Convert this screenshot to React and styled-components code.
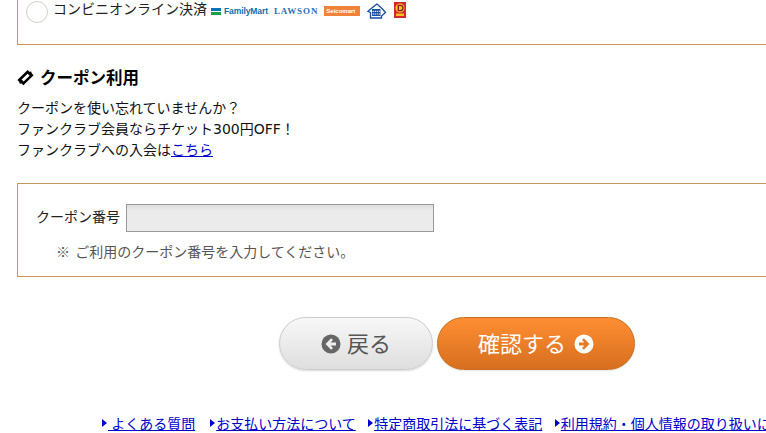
import React from "react";
import styled, { createGlobalStyle } from "styled-components";

const Global = createGlobalStyle`
  html, body { margin: 0; padding: 0; background: #fff; height: 433px; overflow: hidden; }
  body { font-family: "Noto Sans CJK JP", "Liberation Sans", sans-serif; color: #111; }
`;
const Page = styled.div`
  width: 766px; height: 433px; overflow: hidden; display: flex; flex-direction: column;
  padding-left: 17px; box-sizing: border-box;
`;
const PayBox = styled.div`
  width: 770px; height: 45px; box-sizing: border-box; flex: none;
  border: 1px solid #c8955f; border-top: none;
  display: flex; align-items: flex-start; padding: 0 0 0 8px;
`;
const Radio = styled.span`
  width: 22px; height: 22px; box-sizing: border-box; border: 1px solid #d4d0c8; border-radius: 50%; background: #fff;
  margin-top: 1px; flex: none;
`;
const PayLabel = styled.span`
  font-size: 14px; line-height: 16px; margin-left: 5px; color: #222; white-space: nowrap;
`;
const Logos = styled.span`
  display: flex; align-items: center; margin-left: 4px; height: 20px; margin-top: 1px;
`;
const FamilyMart = styled.span`
  display: inline-flex; align-items: center; gap: 3px;
  font: bold 8.5px "Liberation Sans", sans-serif; color: #0b6fa8; letter-spacing: -0.1px;
`;
const FmMark = styled.span`
  width: 10px; height: 7px; display: block;
  background: linear-gradient(#0a74b8 0 3px, #fff 3px 4px, #18a050 4px 7px);
`;
const Lawson = styled.span`
  font: bold 9px "Liberation Serif", serif; color: #2a6fb5; margin-left: 6px; letter-spacing: 0.9px;
`;
const Seicomart = styled.span`
  width: 36px; height: 10px; background: #f0823a; color: #fff; margin-left: 6px; flex: none;
  font: bold 6px/10px "Liberation Sans", sans-serif; padding-left: 2px; box-sizing: border-box; overflow: hidden;
`;
const MiniStop = styled.svg`
  width: 20px; height: 16px; margin-left: 7px; flex: none;
`;
const Daily = styled.svg`
  width: 12px; height: 16px; margin-left: 7px; flex: none; margin-top: -3px;
`;
const Heading = styled.h2`
  margin: 22px 0 0; display: flex; align-items: center; gap: 6px; height: 20px;
  font-size: 16.5px; line-height: 20px; font-weight: 700; color: #000;
`;
const Intro = styled.p`
  margin: 11px 0 0; font-size: 14px; line-height: 21px; color: #111;
  font-family: "DejaVu Sans", "Noto Sans CJK JP", sans-serif;
  a { color: #00c; text-decoration: underline; }
`;
const CouponBox = styled.div`
  margin-top: 22px; width: 770px; height: 94px; box-sizing: border-box; flex: none;
  border: 1px solid #c8955f; padding: 20px 0 0 18px;
`;
const FieldRow = styled.div`
  display: flex; align-items: center; gap: 6px;
`;
const FieldLabel = styled.label`
  font-size: 14px; color: #222; margin-top: -4px;
`;
const CouponInput = styled.input`
  width: 308px; height: 28px; box-sizing: border-box; border: 1px solid #999;
  background: linear-gradient(#dedede, #ebebeb 6px, #ebebeb); padding: 0; outline: none; border-radius: 0;
`;
const Note = styled.p`
  margin: 9px 0 0 20px; font-size: 14px; line-height: 20px; color: #555; word-spacing: 2px;
`;
const Buttons = styled.div`
  margin: 40px 0 0 262px; display: flex; gap: 4px;
`;
const Pill = styled.button`
  height: 53px; border-radius: 27px; box-sizing: border-box; padding: 0; cursor: pointer;
  display: flex; align-items: center; justify-content: center; gap: 7px;
  font-family: inherit; font-size: 22px; line-height: 26px;
`;
const BackButton = styled(Pill)`
  width: 154px; color: #555; border: 1px solid #ccc;
  background: linear-gradient(#f8f8f8, #dedede);
  box-shadow: 0 1px 2px rgba(0,0,0,.15);
  gap: 6px;
`;
const NextButton = styled(Pill)`
  width: 198px; color: #fff; border: 1px solid #c96f1e;
  background: linear-gradient(#ff8e33, #d66f1f);
  box-shadow: 0 1px 2px rgba(0,0,0,.1);
  gap: 8px;
`;
const PillText = styled.span`
  margin-top: -4px;
`;
const CircleIcon = styled.svg`
  width: 20px; height: 20px; flex: none;
`;
const FooterNav = styled.nav`
  margin-top: 44px; margin-left: 85px; display: flex; gap: 12.5px; white-space: nowrap; font-size: 14px; line-height: 18px;
`;
const FooterLink = styled.a`
  color: #00c; text-decoration: underline; position: relative; padding-left: 6px;
  &:first-child { margin-right: 2.5px; }
  &::before {
    content: ""; position: absolute; left: 0; top: 5px;
    border-left: 5px solid #00c; border-top: 4px solid transparent; border-bottom: 4px solid transparent;
  }
`;

const Arrow = ({ dir, bg, fg }) => (
  <CircleIcon viewBox="0 0 20 20">
    <circle cx="10" cy="10" r="9.5" fill={bg} />
    <path
      d={dir === "left" ? "M15 8.4H9.6l2.4-2.4-1.9-1.7L4.5 10l5.6 5.7 1.9-1.7-2.4-2.4H15z" : "M5 8.4h5.4L8 6l1.9-1.7L15.5 10l-5.6 5.7L8 14l2.4-2.4H5z"}
      fill={fg}
    />
  </CircleIcon>
);

export default function App() {
  return (
    <Page>
      <Global />
      <PayBox>
        <Radio />
        <PayLabel>コンビニオンライン決済</PayLabel>
        <Logos>
          <FamilyMart><FmMark />FamilyMart</FamilyMart>
          <Lawson>LAWSON</Lawson>
          <Seicomart>Seicomart</Seicomart>
          <MiniStop viewBox="0 0 20 16">
            <path d="M10 1 3 6.5 1 8.5l2.5 1V15h11v-2l4-3.5-3-3.5-5.5-5z" fill="#fff" stroke="#1a4d9c" strokeWidth="1.3" />
            <rect x="5" y="6" width="8.5" height="7" fill="#1a4d9c" />
            <path d="M5.5 8.3h7.5M5.5 11h7.5" stroke="#fff" strokeWidth="1" strokeDasharray="1.4 .7" />
          </MiniStop>
          <Daily viewBox="0 0 12 16">
            <rect width="12" height="16" fill="#d9232a" />
            <circle cx="6" cy="6" r="4.6" fill="#f6c21c" />
            <path d="M4.3 3.3h2a2.7 2.7 0 0 1 0 5.4h-2z" fill="none" stroke="#8a1c1c" strokeWidth="1.3" />
            <rect x="2" y="11.5" width="8" height="2.5" fill="#f6c21c" />
          </Daily>
        </Logos>
      </PayBox>
      <Heading>
        <svg width="17" height="17" viewBox="0 0 17 17">
          <path d="M10.6 1 12.4 2.8 14.2 2.4 14.8 4.4 16.6 6.2 6.4 16.2 4.6 14.4 2.8 14.8 2.2 12.8.4 11Z" fill="#000" />
          <path d="M10.6 4.8 12.6 6.8 6.6 12.6 4.6 10.6Z" fill="#fff" />
        </svg>
        クーポン利用
      </Heading>
      <Intro>
        クーポンを使い忘れていませんか？<br />
        ファンクラブ会員ならチケット300円OFF！<br />
        ファンクラブへの入会は<a href="#">こちら</a>
      </Intro>
      <CouponBox>
        <FieldRow>
          <FieldLabel>クーポン番号</FieldLabel>
          <CouponInput />
        </FieldRow>
        <Note>※ ご利用のクーポン番号を入力してください。</Note>
      </CouponBox>
      <Buttons>
        <BackButton><Arrow dir="left" bg="#666" fg="#eee" /><PillText>戻る</PillText></BackButton>
        <NextButton><PillText>確認する</PillText><Arrow dir="right" bg="#fff" fg="#e57b25" /></NextButton>
      </Buttons>
      <FooterNav>
        <FooterLink href="#">&nbsp;よくある質問</FooterLink>
        <FooterLink href="#">お支払い方法について</FooterLink>
        <FooterLink href="#">特定商取引法に基づく表記</FooterLink>
        <FooterLink href="#">利用規約・個人情報の取り扱いについて</FooterLink>
      </FooterNav>
    </Page>
  );
}
